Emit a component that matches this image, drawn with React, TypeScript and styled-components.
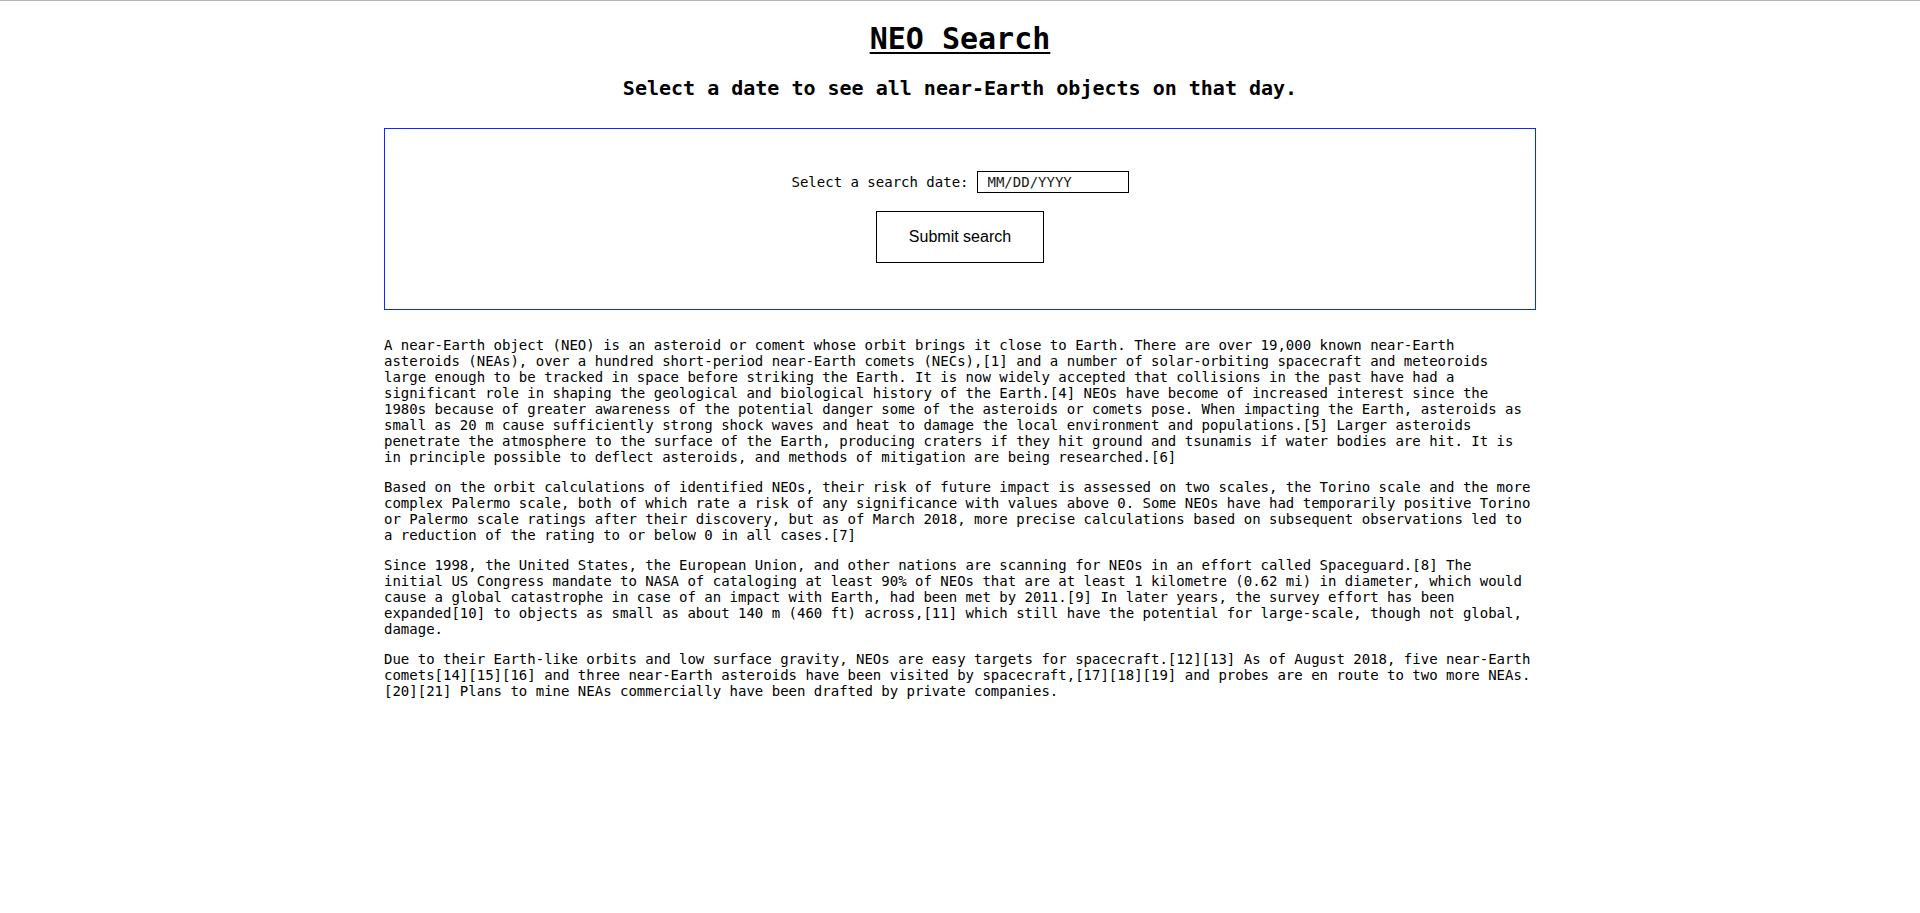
import React from "react";
import styled, { createGlobalStyle } from "styled-components";

const GlobalStyle = createGlobalStyle`
  html, body {
    margin: 0;
    padding: 0;
    background: #ffffff;
  }
  body {
    border-top: 1px solid #b4b4b4;
    font-family: "DejaVu Sans Mono", monospace;
    color: #000000;
  }
`;

const Page = styled.main`
  width: 60%;
  margin: 0 auto;
  display: flex;
  flex-direction: column;
  align-items: stretch;
`;

const Title = styled.h1`
  margin: 20px 0 0;
  font-family: "DejaVu Sans Mono", monospace;
  font-size: 30px;
  line-height: 35px;
  font-weight: bold;
  text-align: center;
  text-decoration: underline;
  text-decoration-thickness: 2px;
  text-underline-offset: 3px;
`;

const Subtitle = styled.h2`
  margin: 21px 0 0;
  font-family: "DejaVu Sans Mono", monospace;
  font-size: 20px;
  line-height: 23px;
  font-weight: bold;
  text-align: center;
`;

const SearchBox = styled.form`
  box-sizing: border-box;
  margin-top: 28px;
  height: 182px;
  border: 1px solid #0a2cff;
  padding: 42px 0 0;
  display: flex;
  flex-direction: column;
  align-items: center;
  gap: 18px;
`;

const DateRow = styled.div`
  display: flex;
  align-items: center;
  gap: 8px;
  height: 22px;
`;

const Label = styled.label`
  font-family: "DejaVu Sans Mono", monospace;
  font-size: 14px;
  line-height: 16px;
`;

const DateInput = styled.input`
  box-sizing: border-box;
  width: 152px;
  height: 22px;
  padding: 0 10px;
  border: 1px solid #000000;
  border-radius: 0;
  background: #ffffff;
  font-family: "DejaVu Sans Mono", monospace;
  font-size: 14px;
  color: #000000;
  outline: none;
  &::placeholder {
    color: #1a1a1a;
    opacity: 1;
  }
`;

const SubmitButton = styled.button`
  box-sizing: border-box;
  width: 168px;
  height: 52px;
  border: 1px solid #000000;
  border-radius: 0;
  background: #ffffff;
  font-family: "Liberation Sans", Arial, sans-serif;
  font-size: 16px;
  color: #000000;
  cursor: pointer;
`;

const Article = styled.section`
  margin-top: 13px;
`;

const Paragraph = styled.p`
  margin: 14px 0;
  font-family: "DejaVu Sans Mono", monospace;
  font-size: 14px;
  line-height: 16px;
`;

const paragraphs = [
  "A near-Earth object (NEO) is an asteroid or coment whose orbit brings it close to Earth. There are over 19,000 known near-Earth asteroids (NEAs), over a hundred short-period near-Earth comets (NECs),[1] and a number of solar-orbiting spacecraft and meteoroids large enough to be tracked in space before striking the Earth. It is now widely accepted that collisions in the past have had a significant role in shaping the geological and biological history of the Earth.[4] NEOs have become of increased interest since the 1980s because of greater awareness of the potential danger some of the asteroids or comets pose. When impacting the Earth, asteroids as small as 20 m cause sufficiently strong shock waves and heat to damage the local environment and populations.[5] Larger asteroids penetrate the atmosphere to the surface of the Earth, producing craters if they hit ground and tsunamis if water bodies are hit. It is in principle possible to deflect asteroids, and methods of mitigation are being researched.[6]",
  "Based on the orbit calculations of identified NEOs, their risk of future impact is assessed on two scales, the Torino scale and the more complex Palermo scale, both of which rate a risk of any significance with values above 0. Some NEOs have had temporarily positive Torino or Palermo scale ratings after their discovery, but as of March 2018, more precise calculations based on subsequent observations led to a reduction of the rating to or below 0 in all cases.[7]",
  "Since 1998, the United States, the European Union, and other nations are scanning for NEOs in an effort called Spaceguard.[8] The initial US Congress mandate to NASA of cataloging at least 90% of NEOs that are at least 1 kilometre (0.62 mi) in diameter, which would cause a global catastrophe in case of an impact with Earth, had been met by 2011.[9] In later years, the survey effort has been expanded[10] to objects as small as about 140 m (460 ft) across,[11] which still have the potential for large-scale, though not global, damage.",
  "Due to their Earth-like orbits and low surface gravity, NEOs are easy targets for spacecraft.[12][13] As of August 2018, five near-Earth comets[14][15][16] and three near-Earth asteroids have been visited by spacecraft,[17][18][19] and probes are en route to two more NEAs.[20][21] Plans to mine NEAs commercially have been drafted by private companies.",
];

export default function App() {
  return (
    <>
      <GlobalStyle />
      <Page>
        <Title>NEO Search</Title>
        <Subtitle>Select a date to see all near-Earth objects on that day.</Subtitle>
        <SearchBox onSubmit={(e) => e.preventDefault()}>
          <DateRow>
            <Label htmlFor="search-date">Select a search date:</Label>
            <DateInput id="search-date" type="text" placeholder="MM/DD/YYYY" />
          </DateRow>
          <SubmitButton type="submit">Submit search</SubmitButton>
        </SearchBox>
        <Article>
          {paragraphs.map((text, i) => (
            <Paragraph key={i}>{text}</Paragraph>
          ))}
        </Article>
      </Page>
    </>
  );
}
